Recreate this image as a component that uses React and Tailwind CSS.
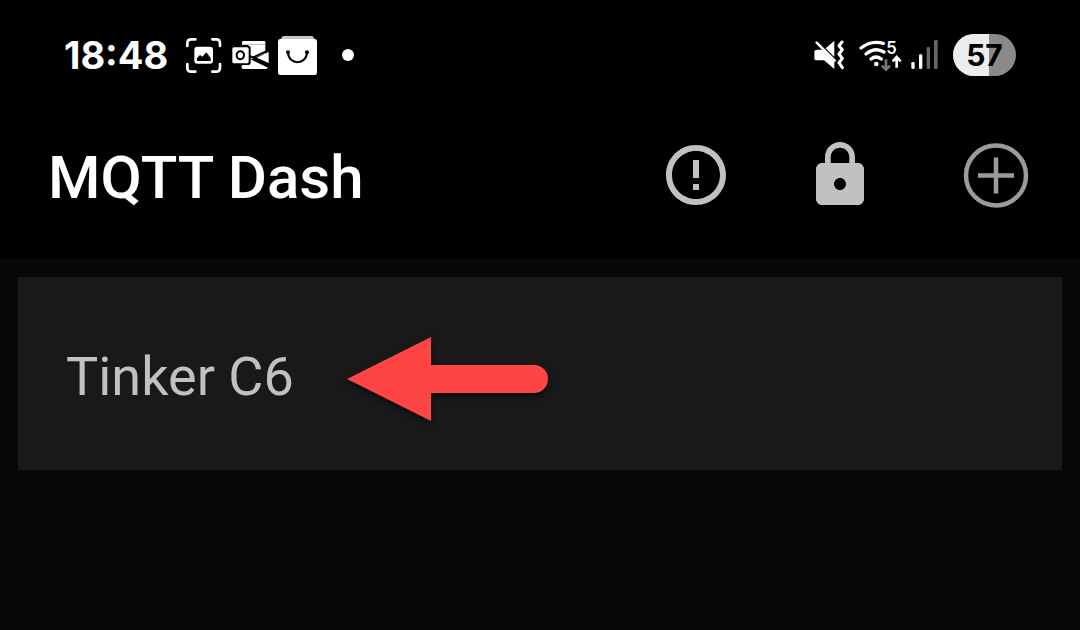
import React from 'react';
import { MdErrorOutline } from 'react-icons/md';

const ScreenshotIcon = () => (
  <svg viewBox="18 21 108 108" className="w-9 h-9" fill="none" aria-hidden="true">
    <path
      d="M22 48V40q0-12 12-12h12M97 28h11q12 0 12 12v8M120 102v11q0 12-12 12H97M46 125H34q-12 0-12-12v-11"
      stroke="#fff"
      strokeWidth="8"
      strokeLinecap="round"
    />
    <rect x="43" y="50" width="56" height="51" rx="9" fill="#fff" />
    <path d="M51 93v-9l9-9 7 5 12-13 13 17v9z" fill="#000" />
  </svg>
);

const OutlookIcon = () => (
  <svg viewBox="156 30 114 90" className="w-[38px] h-[30px]" aria-hidden="true">
    <path d="M186 37q0-4 4-4h62q4 0 4 4v8h-70z" fill="#fff" />
    <path d="M186 43h70" stroke="#999" strokeWidth="2" />
    <path d="M205 45h51v25l-38 16h-13z" fill="#fff" />
    <path d="M266 66v33l-36-16z" fill="#fff" />
    <path d="M210 87l54 26q-3 4-8 4h-66q-5 0-6-5l3-7h20z" fill="#fff" />
    <path d="M208 78l12 4 38-18M218 82l48 23" stroke="#000" strokeWidth="6" fill="none" />
    <rect x="155" y="47" width="57" height="58" rx="8" fill="#000" />
    <rect x="157" y="52" width="49" height="48" rx="5" fill="#fff" />
    <ellipse cx="181" cy="76" rx="11" ry="12" fill="none" stroke="#000" strokeWidth="6" />
  </svg>
);

const BagIcon = () => (
  <svg viewBox="24 15 120 120" className="w-10 h-10" aria-hidden="true">
    <path d="M32 28l4-7q2-3 6-3h82q4 0 6 3l4 7z" fill="#c9c5c7" />
    <rect x="24" y="27" width="117" height="108" rx="7" fill="#fff" />
    <path d="M54 68c2 38 55 38 57 0" fill="none" stroke="#000" strokeWidth="6" />
    <circle cx="54" cy="67" r="6" fill="#000" />
    <circle cx="111" cy="67" r="6" fill="#000" />
  </svg>
);

const VibrateIcon = () => (
  <svg viewBox="27 30 90 90" className="w-[30px] h-[30px]" aria-hidden="true">
    <path d="M88 32v49L62 55z" fill="#fff" />
    <path d="M36 59h16l36 36v22L57 91H36q-8 0-8-8V67q0-8 8-8z" fill="#fff" />
    <path d="M35 38l54 54" stroke="#fff" strokeWidth="8" strokeLinecap="round" />
    <path
      d="M111 36l-9 11 10 12-10 13 10 13-10 13 10 15"
      fill="none"
      stroke="#fff"
      strokeWidth="9"
      strokeLinecap="round"
      strokeLinejoin="round"
    />
  </svg>
);

const WifiIcon = () => (
  <svg viewBox="162 30 129 90" className="w-[43px] h-[30px] overflow-visible" fill="none" aria-hidden="true">
    <g stroke="#fff" strokeWidth="10" strokeLinecap="round">
      <path d="M168 54q30-24 67-14" />
      <path d="M183 72q27-22 54-6" />
      <path d="M198 87q15-12 31 0" />
    </g>
    <circle cx="214" cy="102" r="7" fill="#fff" />
    <text x="244" y="72" fontSize="50" fontWeight="600" fontFamily="Inter, sans-serif" fill="#fff">5</text>
    <path d="M243 88v30M231 107l12 12 12-12" stroke="#777" strokeWidth="8" />
    <path d="M275 113V82M263 94l12-13 12 13" stroke="#fff" strokeWidth="8" />
  </svg>
);

const SignalIcon = () => (
  <svg viewBox="33 45 81 90" className="w-[27px] h-[30px]" aria-hidden="true">
    <rect x="34" y="111" width="10" height="21" rx="4" fill="#fff" />
    <rect x="57" y="88" width="10" height="44" rx="4" fill="#fff" />
    <rect x="80" y="66" width="10" height="66" rx="4" fill="#666" />
    <rect x="102" y="45" width="11" height="87" rx="4" fill="#666" />
  </svg>
);

const LockIcon = () => (
  <svg viewBox="0 0 24 24" className="w-[72px] h-[72px]" fill="currentColor" aria-hidden="true">
    <path d="M18 8h-1V6c0-2.76-2.24-5-5-5S7 3.24 7 6v2H6c-1.1 0-2 .9-2 2v10c0 1.1.9 2 2 2h12c1.1 0 2-.9 2-2V10c0-1.1-.9-2-2-2zM8.9 6c0-1.71 1.39-3.1 3.1-3.1s3.1 1.39 3.1 3.1v2H8.9V6zM12 17c-1.1 0-2-.9-2-2s.9-2 2-2 2 .9 2 2-.9 2-2 2z" />
  </svg>
);

const AddIcon = () => (
  <svg viewBox="0 0 72 72" className="w-[72px] h-[72px]" fill="none" stroke="currentColor" aria-hidden="true">
    <circle cx="36" cy="36.5" r="30" strokeWidth="4.5" />
    <path d="M36 18.5v36M18 36.5h36" strokeWidth="4.5" />
  </svg>
);

const ArrowMark = () => (
  <svg viewBox="0 0 204 88" className="w-[204px] h-[88px] shrink-0 overflow-visible drop-shadow-[0_3px_3px_rgba(0,0,0,0.6)]" aria-hidden="true">
    <path d="M0 46L84 4v28h103a14 14 0 0 1 0 28H84v28z" fill="#ff4444" />
  </svg>
);

const StatusBar = ({ time, battery }) => (
  <div className="flex items-center justify-between h-[92px] pt-[18px] pl-16 pr-16">
    <div className="flex items-center gap-[18px]">
      <span className="font-[Inter,sans-serif] font-bold text-[38px] leading-[52px] text-white">{time}</span>
      <div className="flex items-center">
        <ScreenshotIcon />
        <span className="ml-[10px]"><OutlookIcon /></span>
        <span className="ml-2"><BagIcon /></span>
        <span className="ml-6 w-3 h-3 rounded-full bg-white" />
      </div>
    </div>
    <div className="flex items-center">
      <VibrateIcon />
      <span className="ml-[15px]"><WifiIcon /></span>
      <span className="ml-[9px]"><SignalIcon /></span>
      {/* battery pill, filled part follows the charge level */}
      <div className="relative ml-[15px] w-[63px] h-[42px] rounded-full overflow-hidden bg-[#8a8a8a] flex items-center justify-center">
        <div className="absolute inset-y-0 left-0 bg-[#ededed]" style={{ width: `${battery}%` }} />
        <span className="relative font-[Inter,sans-serif] font-bold text-[30px] leading-[42px] text-black">
          {battery}
        </span>
      </div>
    </div>
  </div>
);

const Toolbar = ({ title }) => (
  <div className="flex items-center justify-between h-[167px] pl-12 pr-12 pb-0.5">
    <h1 className="font-medium text-[60px] leading-[72px] pt-1.5 text-white whitespace-nowrap">{title}</h1>
    <div className="flex items-center text-[#c1c1c1]">
      <button type="button" aria-label="Information">
        <MdErrorOutline className="w-[72px] h-[72px]" />
      </button>
      <button type="button" aria-label="Lock" className="ml-[72px]">
        <LockIcon />
      </button>
      <button type="button" aria-label="Add connection" className="ml-[84px] text-[#9b9b9b]">
        <AddIcon />
      </button>
    </div>
  </div>
);

const ConnectionItem = ({ name, marked }) => (
  <li>
    <button type="button" className="flex items-center w-full bg-[#191919] pt-14 pb-[49px] pl-12 text-left">
      <span className="text-[54px] leading-[64px] text-[#c1c1c1] whitespace-nowrap">{name}</span>
      {marked && (
        <span className="ml-[53px]">
          <ArrowMark />
        </span>
      )}
    </button>
  </li>
);

const connections = [{ name: 'Tinker C6', marked: true }];

const App = () => {
  return (
    <div className="min-h-screen bg-[#080808] font-[Roboto,sans-serif]">
      <header className="bg-black">
        <StatusBar time="18:48" battery={57} />
        <Toolbar title="MQTT Dash" />
      </header>
      <main className="p-[18px]">
        <ul>
          {connections.map((item) => (
            <ConnectionItem key={item.name} name={item.name} marked={item.marked} />
          ))}
        </ul>
      </main>
    </div>
  );
};

export default App;
